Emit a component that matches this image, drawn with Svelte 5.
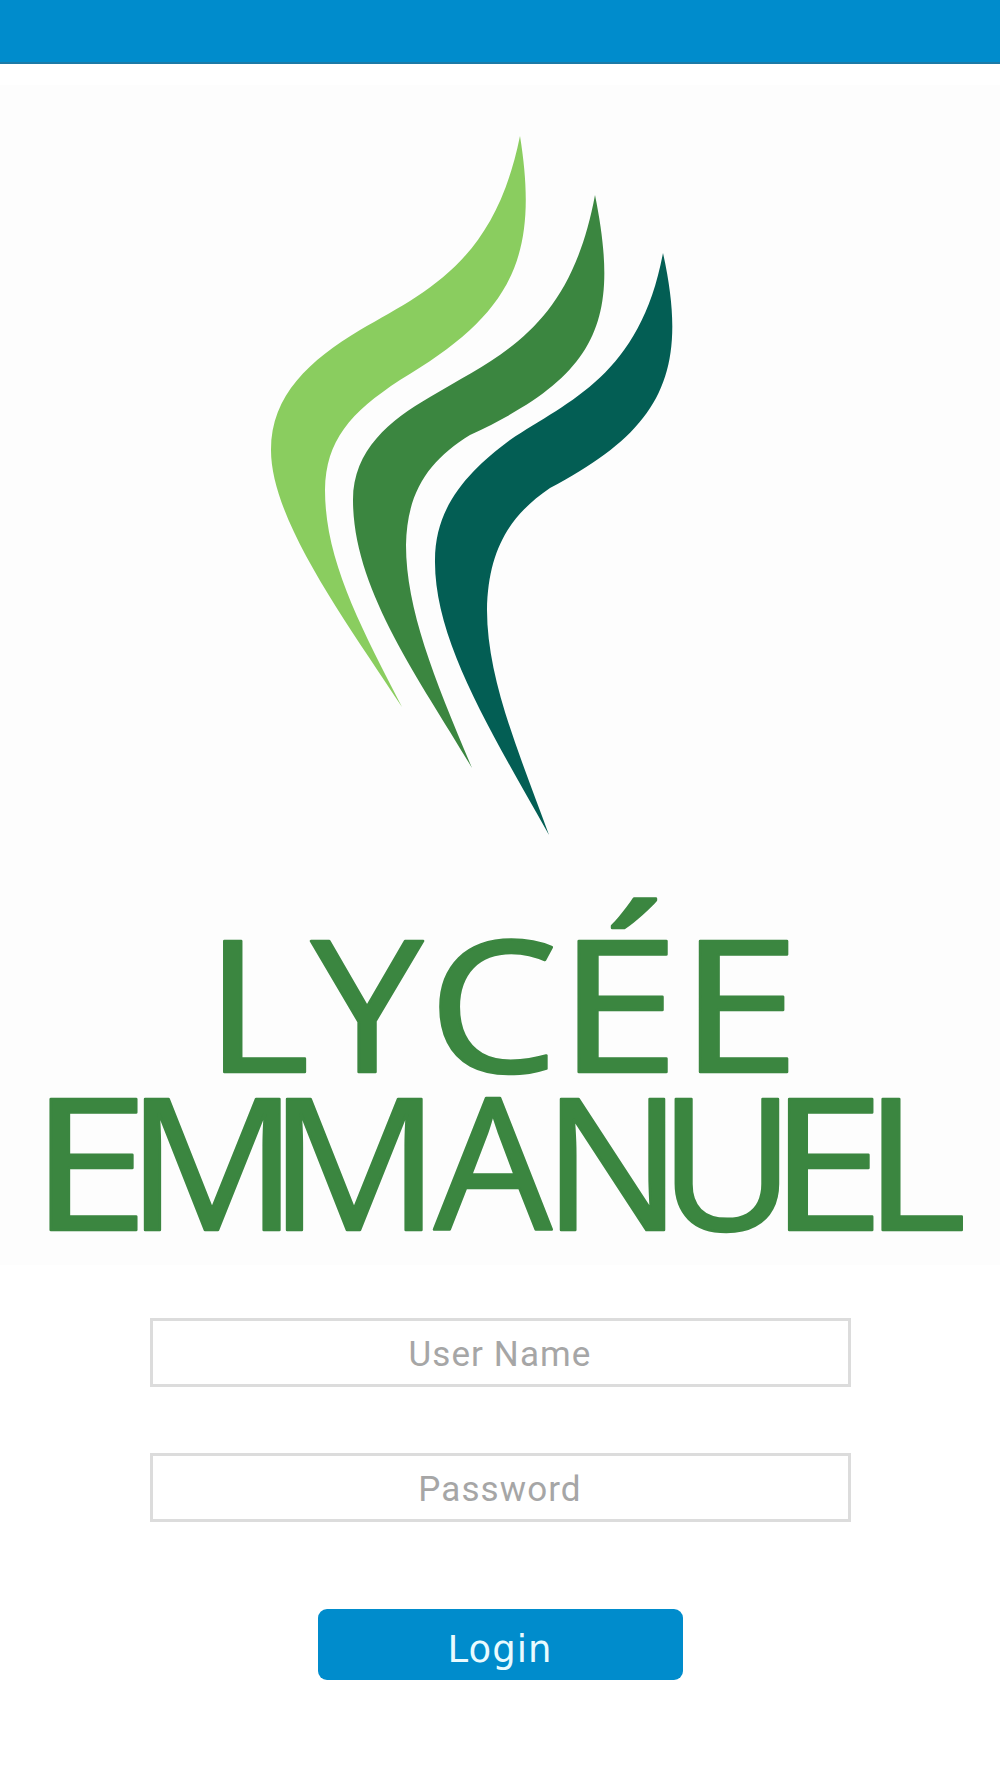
<script>
  const flames = [
    { color: '#8acd5f', d: 'M520 136C540 260 510 315 400 380C350 413 326 440 325 490C325 560 360 625 402 707C345 620 271 520 271 450C271 395 310 360 360 330C430 290 495 260 520 136Z' },
    { color: '#3b8640', d: 'M595 195C620 320 600 375 470 435C430 460 407 490 406 545C406 610 435 680 472 768C420 680 353 590 353 500C353 450 390 420 430 397C500 355 570 330 595 195Z' },
    { color: '#035e54', d: 'M663 253C690 375 660 430 550 488C510 515 488 550 487 610C487 680 520 755 549 835C490 730 434 640 435 560C435 505 470 470 510 440C570 400 640 375 663 253Z' }
  ];
</script>

<div class="page">
  <header class="bar"></header>
  <div class="logo">
    <svg viewBox="0 85 1000 1180" width="1000" height="1180" role="img" aria-label="Lycée Emmanuel">
      {#each flames as f}
        <path d={f.d} fill={f.color} />
      {/each}
      <text class="word" y="1072"><tspan x="204.7" textLength="105" lengthAdjust="spacingAndGlyphs">L</tspan><tspan x="311" textLength="112" lengthAdjust="spacingAndGlyphs">Y</tspan><tspan x="428" textLength="130" lengthAdjust="spacingAndGlyphs">C</tspan><tspan x="557.6" textLength="122" lengthAdjust="spacingAndGlyphs">É</tspan><tspan x="679" textLength="121" lengthAdjust="spacingAndGlyphs">E</tspan></text>
      <text class="word" y="1230"><tspan x="30" textLength="119" lengthAdjust="spacingAndGlyphs">E</tspan><tspan x="126.5" textLength="171.5" lengthAdjust="spacingAndGlyphs">M</tspan><tspan x="268.5" textLength="171.5" lengthAdjust="spacingAndGlyphs">M</tspan><tspan x="434" textLength="118" lengthAdjust="spacingAndGlyphs">A</tspan><tspan x="543" textLength="139" lengthAdjust="spacingAndGlyphs">N</tspan><tspan x="659" textLength="136" lengthAdjust="spacingAndGlyphs">U</tspan><tspan x="769" textLength="115.6" lengthAdjust="spacingAndGlyphs">E</tspan><tspan x="863.6" textLength="103" lengthAdjust="spacingAndGlyphs">L</tspan></text>
    </svg>
  </div>
  <form class="form" onsubmit={(e) => e.preventDefault()}>
    <input type="text" placeholder="User Name" />
    <input type="password" placeholder="Password" />
    <button type="submit">Login</button>
  </form>
</div>

<style>
  :global(body) {
    margin: 0;
    background: #fff;
  }
  .page {
    width: 1000px;
    height: 1778px;
    overflow: hidden;
    background: #fff;
  }
  .bar {
    height: 62px;
    background: #008ccc;
    border-bottom: 2px solid #1d7aa6;
  }
  .logo {
    margin-top: 21px;
    height: 1180px;
    background: #fdfdfd;
  }
  .logo svg {
    display: block;
  }
  .word {
    font-family: "Open Sans", sans-serif;
    font-size: 184px;
    fill: #3b8640;
    stroke: #3b8640;
    stroke-width: 2.5px;
    stroke-linejoin: round;
  }
  .form {
    display: flex;
    flex-direction: column;
    align-items: center;
    padding-top: 53px;
  }
  input {
    box-sizing: border-box;
    width: 701px;
    height: 69px;
    margin-bottom: 66px;
    padding: 4px 0 0;
    border: 3px solid #dcdcdc;
    border-radius: 0;
    outline: none;
    background: #fff;
    text-align: center;
    font-family: Roboto, sans-serif;
    font-size: 35px;
    letter-spacing: 1.1px;
    color: #a6a6a6;
  }
  input::placeholder {
    color: #a6a6a6;
    opacity: 1;
  }
  button {
    box-sizing: border-box;
    width: 365px;
    height: 71px;
    margin-top: 21px;
    border: 0;
    border-radius: 9px;
    background: #008ccc;
    color: #e9fbff;
    font-family: "DejaVu Sans", sans-serif;
    font-size: 37px;
    letter-spacing: 1px;
    padding: 10px 0 0;
  }
</style>
